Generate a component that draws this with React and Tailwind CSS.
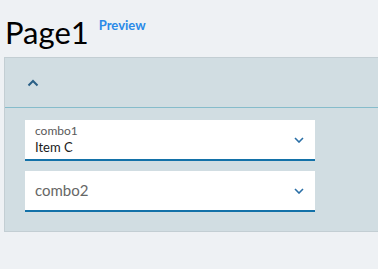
export default function App() {
  return (
    <main className="w-[378px] h-[269px] bg-[#eef1f4] overflow-hidden" style={{ fontFamily: 'Lato, "Noto Sans", sans-serif' }}>
      <div className="flex items-start pl-[5px] pt-[12px] h-[57px]">
        <h1 className="text-[31px] leading-[40px] text-black">Page1</h1>
        <a className="ml-[10px] mt-[4px] text-[13px] font-bold text-[#2a8ae8]">Preview</a>
      </div>

      <section className="ml-[4px] bg-[#d1dde2] border-l border-t border-b border-[#c3ced3]">
        <div className="h-[50px] flex items-center pl-[22px] border-b border-[#86bccb]">
          <svg width="12" height="8" viewBox="0 0 12 8" fill="none">
            <path d="M1.5 6.5 L6 2 L10.5 6.5" stroke="#2a5f86" strokeWidth="2" />
          </svg>
        </div>

        <div className="flex flex-col gap-[10px] pl-[20px] pt-[12px] pb-[19px]">
          <div className="w-[290px] h-[41px] bg-white border-b-2 border-[#1371a8] flex items-center pl-[10px] pr-[11px]">
            <div className="flex-1 flex flex-col pt-[1px]">
              <span className="text-[12px] leading-[14px] text-[#5a5a5a]">combo1</span>
              <span className="text-[13px] leading-[18px] text-[#1a1a1a]">Item C</span>
            </div>
            <svg width="10" height="6" viewBox="0 0 10 6" fill="none">
              <path d="M1 1 L5 5 L9 1" stroke="#2a6fa6" strokeWidth="1.6" />
            </svg>
          </div>

          <div className="w-[290px] h-[41px] bg-white border-b-2 border-[#1371a8] flex items-center pl-[10px] pr-[11px]">
            <span className="flex-1 text-[15px] text-[#666]">combo2</span>
            <svg width="10" height="6" viewBox="0 0 10 6" fill="none">
              <path d="M1 1 L5 5 L9 1" stroke="#2a6fa6" strokeWidth="1.6" />
            </svg>
          </div>
        </div>
      </section>
    </main>
  )
}
